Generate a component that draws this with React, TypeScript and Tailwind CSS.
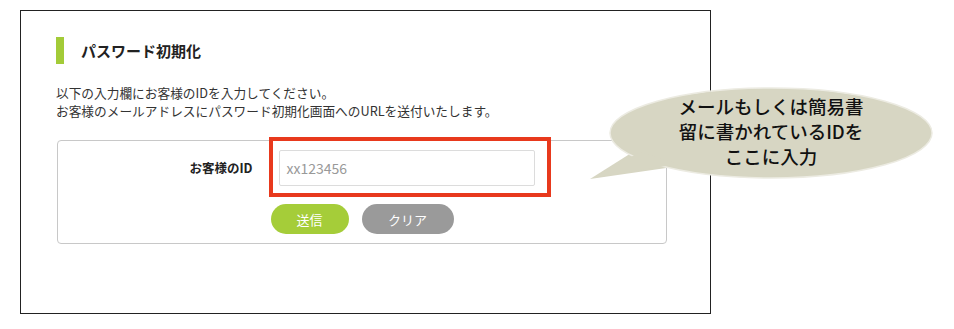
import React from "react";

export default function App() {
  const jp = { fontFamily: '"Noto Sans CJK JP", "Noto Sans", sans-serif' };
  return (
    <div
      className="relative w-[954px] h-[329px] bg-white overflow-hidden"
      style={jp}
    >
      <div className="pt-[10px] pl-[20px]">
        <div className="w-[691px] h-[304px] border border-[#222] pl-[35px] pt-[26px]">
          <div className="flex items-center h-[27px]">
            <div className="w-[8px] h-[27px] bg-[#a3cb38]" />
            <h1 className="ml-[17px] text-[15px] font-bold text-[#222] leading-none">
              パスワード初期化
            </h1>
          </div>
          <div className="mt-[20px] text-[12.7px] leading-[18px] text-[#333]">
            <p>以下の入力欄にお客様のIDを入力してください。</p>
            <p>お客様のメールアドレスにパスワード初期化画面へのURLを送付いたします。</p>
          </div>
          <div className="mt-[20px] ml-[1px] w-[610px] h-[104px] border border-[#c8c8c8] rounded-[4px] flex flex-col items-center pt-[9px]">
            <div className="flex items-center">
              <label className="text-[12.5px] font-bold text-[#222] leading-none">
                お客様のID
              </label>
              <div className="relative ml-[26px]">
                <div className="w-[256px] h-[36px] border border-[#dcdcdc] rounded-[2px] flex items-center pl-[7px] text-[14px] text-[#999]">
                  xx123456
                </div>
                <div className="absolute left-[-10px] right-[-16px] top-[-13px] bottom-[-11px] border-[4px] border-[#e8391d]" />
              </div>
            </div>
            <div className="mt-[18px] flex gap-[13px]">
              <button className="w-[78px] h-[30px] rounded-full bg-[#a5cd39] text-white text-[13px] leading-none">
                送信
              </button>
              <button className="w-[92px] h-[30px] rounded-full bg-[#9a9a9a] text-white text-[13px] leading-none">
                クリア
              </button>
            </div>
          </div>
        </div>
      </div>

      <svg
        className="absolute left-0 top-0 pointer-events-none"
        width="954"
        height="329"
        viewBox="0 0 954 329"
      >
        <polygon points="636,150 590,179 680,166" fill="#d7d6c3" />
        <ellipse
          cx="771"
          cy="133"
          rx="161"
          ry="45"
          fill="#d7d6c3"
          stroke="#ecebe2"
          strokeWidth="1.5"
        />
        <polygon points="640,152 593,178 678,164" fill="#d7d6c3" />
      </svg>
      <div className="absolute left-[610px] top-[94px] w-[322px] text-center text-[18.5px] font-medium leading-[25px] text-[#111]">
        <div>メールもしくは簡易書</div>
        <div>留に書かれているIDを</div>
        <div>ここに入力</div>
      </div>
    </div>
  );
}
